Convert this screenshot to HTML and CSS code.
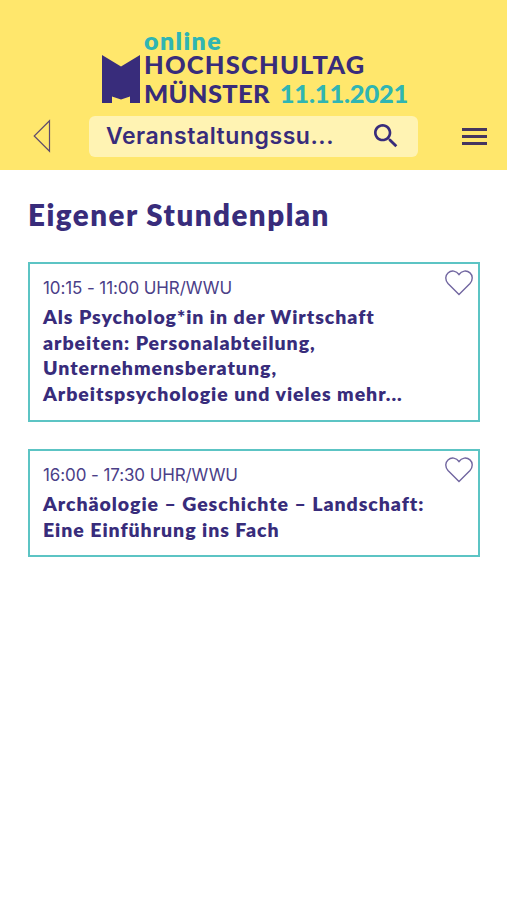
FILE: index.html
```html
<!DOCTYPE html>
<html lang="de">

<head>
    <meta charset="utf-8">
    <meta name="viewport" content="width=device-width, initial-scale=1">
    <title>Eigener Stundenplan</title>
    <link rel="stylesheet" href="styles.css">
</head>

<body>
    <header class="header">
        <div class="logo">
            <svg class="logo-mark" width="38" height="48" viewBox="0 0 38 48">
                <path d="M0 0L19 11.5L38 0V48H28V41.5L19 44.500L10 41.500V48H0Z" fill="#382c7b" />
            </svg>
            <div class="logo-text">
                <span class="logo-online">online</span>
                <span class="logo-name">HOCHSCHULTAG</span>
                <div class="logo-row">
                    <span class="logo-city">MÜNSTER</span>
                    <span class="logo-date">11.11.2021</span>
                </div>
            </div>
        </div>
        <nav class="toolbar">
            <a class="back">
                <svg width="18" height="34" viewBox="0 0 18 34">
                    <path d="M16.5 1.8V32.2L1.2 17Z" fill="none" stroke="#5f4b6c" stroke-width="1.2" />
                </svg>
            </a>
            <div class="search">
                <span class="search-text">Veranstaltungssu...</span>
                <svg class="search-icon" width="32" height="32" viewBox="0 0 24 24">
                    <path d="M15.5 14h-.79l-.28-.27C15.41 12.59 16 11.11 16 9.5 16 5.91 13.09 3 9.5 3S3 5.91 3 9.5 5.91 16 9.5 16c1.61 0 3.09-.59 4.23-1.57l.27.28v.79l5 4.99L20.49 19l-4.99-5zm-6 0C7.01 14 5 11.99 5 9.5S7.01 5 9.5 5 14 7.01 14 9.5 11.99 14 9.5 14z" fill="#382c7b" />
                </svg>
            </div>
            <a class="menu">
                <span></span>
                <span></span>
                <span></span>
            </a>
        </nav>
    </header>

    <main class="content">
        <h1>Eigener Stundenplan</h1>

        <article class="card">
            <p class="time">10:15 - 11:00 UHR/WWU</p>
            <h2>Als Psycholog*in in der Wirtschaft<br>arbeiten: Personalabteilung,<br>Unternehmensberatung,<br>Arbeitspsychologie und vieles mehr...</h2>
            <svg class="heart" width="28" height="26" viewBox="0 0 28 26">
                <path d="M14 24.6L3 13.5C-.2 10 .3 5.300 3 2.900C6.300 0 11.300 .6 14 4.500C16.700 .6 21.700 0 25 2.900C27.700 5.300 28.200 10 25 13.500Z" />
            </svg>
        </article>

        <article class="card">
            <p class="time">16:00 - 17:30 UHR/WWU</p>
            <h2>Archäologie – Geschichte – Landschaft:<br>Eine Einführung ins Fach</h2>
            <svg class="heart" width="28" height="26" viewBox="0 0 28 26">
                <path d="M14 24.6L3 13.5C-.2 10 .3 5.300 3 2.900C6.300 0 11.300 .6 14 4.500C16.700 .6 21.700 0 25 2.900C27.700 5.300 28.200 10 25 13.500Z" />
            </svg>
        </article>
    </main>
</body>

</html>
```
FILE: styles.css
```css
body {
    margin: 0;
    background: #ffffff;
    color: #382c7b;
    font-family: Lato, sans-serif;
}

.header {
    box-sizing: border-box;
    height: 170px;
    padding-top: 28px;
    background: #ffe76c;
}

.logo {
    display: flex;
    align-items: flex-end;
    gap: 4px;
    height: 76px;
    margin-left: 102px;
}

.logo-mark {
    margin-bottom: 1px;
}

.logo-text {
    display: flex;
    flex-direction: column;
    margin-bottom: -4px;
    font-size: 25.5px;
    font-weight: 900;
    line-height: 29px;
    white-space: nowrap;
}

.logo-online {
    line-height: 19px;
    font-size: 25px;
    font-weight: 800;
    letter-spacing: 1.4px;
    color: #2fb5b3;
}

.logo-name {
    letter-spacing: 1.2px;
}

.logo-row {
    display: flex;
    gap: 10px;
    line-height: 29px;
}

.logo-city {
    letter-spacing: 0.3px;
}

.logo-date {
    letter-spacing: -0.2px;
    color: #2fb5b3;
}

.toolbar {
    display: flex;
    align-items: center;
    height: 41px;
    margin-top: 12px;
    padding: 0 20px 0 33px;
}

.back {
    display: flex;
    margin-top: -2px;
}

.search {
    box-sizing: border-box;
    display: flex;
    align-items: center;
    justify-content: space-between;
    width: 329px;
    height: 41px;
    margin-left: 38px;
    padding: 0 16px 2px 17px;
    border-radius: 6px;
    background: #fff3b3;
    font-family: Inter, sans-serif;
    font-size: 23px;
    font-weight: 600;
    letter-spacing: 0.55px;
}

.menu {
    display: flex;
    flex-direction: column;
    gap: 4px;
    width: 25px;
    margin-left: auto;
}

.menu span {
    height: 2.7px;
    background: #45365f;
}

.content {
    padding: 26px 27px 0 28px;
}

h1 {
    margin: 0 0 28px;
    font-size: 29.5px;
    font-weight: 800;
    line-height: 38px;
    letter-spacing: 1.5px;
    white-space: nowrap;
}

.card {
    position: relative;
    box-sizing: border-box;
    margin-bottom: 27px;
    padding: 14px 13px 13px;
    border: 2px solid #5cc4c4;
}

.time {
    margin: 0 0 5px;
    color: #4b4088;
    font-family: Inter, sans-serif;
    font-size: 17px;
    line-height: 21px;
    letter-spacing: -0.1px;
}

h2 {
    margin: 0;
    font-size: 19.5px;
    font-weight: 800;
    line-height: 25.7px;
    letter-spacing: 0.95px;
    white-space: nowrap;
}

.heart {
    position: absolute;
    top: 6px;
    right: 5px;
    fill: none;
    stroke: #7166a0;
    stroke-width: 1.4;
}
```
